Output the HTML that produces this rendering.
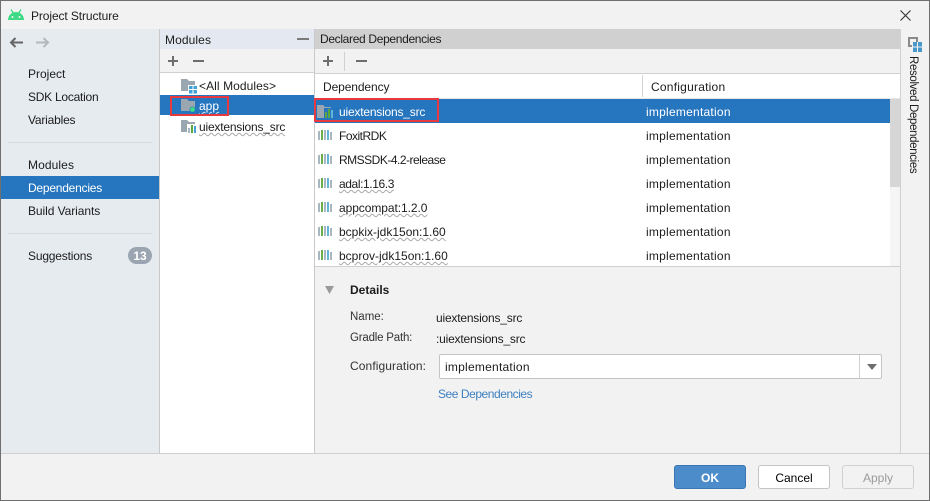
<!DOCTYPE html>
<html><head><meta charset="utf-8"><style>
html,body{margin:0;padding:0;background:#f2f2f2}
#r{position:relative;width:930px;height:501px;overflow:hidden;background:#f2f2f2;font-family:"Liberation Sans",sans-serif;font-size:12px;color:#1c1c1c}
#r div,#r svg{position:absolute}
.t{white-space:nowrap;line-height:16px;height:16px}
.w{text-decoration:underline wavy #a8a8a8 1px;text-underline-offset:1px}
.wh{color:#fff}
.i{letter-spacing:.24px}
.u{letter-spacing:-.2px}
</style></head><body><div id="r">
<!-- panels -->
<div style="left:1px;top:29px;width:158px;height:424px;background:#e6ebf0"></div>
<div style="left:159px;top:29px;width:1px;height:424px;background:#c9c9c9"></div>
<div style="left:160px;top:29px;width:154px;height:20px;background:#e4e8f0"></div>
<div style="left:160px;top:49px;width:154px;height:23px;background:#f2f2f2"></div>
<div style="left:160px;top:72px;width:154px;height:1px;background:#d0d0d0"></div>
<div style="left:160px;top:73px;width:154px;height:380px;background:#fff"></div>
<div style="left:314px;top:29px;width:1px;height:424px;background:#c9c9c9"></div>
<div style="left:315px;top:29px;width:585px;height:20px;background:#d0d0d0"></div>
<div style="left:315px;top:73px;width:585px;height:1px;background:#d0d0d0"></div>
<div style="left:344px;top:52px;width:1px;height:19px;background:#d0d0d0"></div>
<div style="left:315px;top:74px;width:585px;height:192px;background:#fff"></div>
<div style="left:315px;top:98px;width:585px;height:1px;background:#e6e6e6"></div>
<div style="left:642px;top:75px;width:1px;height:22px;background:#d4d4d4"></div>
<div style="left:315px;top:266px;width:585px;height:1px;background:#d0d0d0"></div>
<div style="left:890px;top:99px;width:10px;height:167px;background:#f5f5f5"></div>
<div style="left:890px;top:99px;width:10px;height:88px;background:#d6d6d6"></div>
<div style="left:900px;top:29px;width:1px;height:424px;background:#d0d0d0"></div>
<div style="left:1px;top:453px;width:928px;height:1px;background:#d0d0d0"></div>
<!-- selections -->
<div style="left:1px;top:176px;width:158px;height:23px;background:#2675bf"></div>
<div style="left:160px;top:95px;width:154px;height:20px;background:#2675bf"></div>
<div style="left:315px;top:99px;width:575px;height:24px;background:#2675bf"></div>
<!-- title -->
<svg style="left:8px;top:9px" width="17" height="12" viewBox="0 0 17 12"><path d="M0 11C0 6.500 3.500 3 8 3s8 3.500 8 8z" fill="#3ddc84"/><path d="M3 .5l2.500 4M13 .5l-2.500 4" stroke="#3ddc84" stroke-width="1.300"/><circle cx="4.500" cy="8" r="1" fill="#f2f2f2"/><circle cx="11.500" cy="8" r="1" fill="#f2f2f2"/></svg>
<div class="t" style="left:31px;top:8px;letter-spacing:-.1px">Project Structure</div>
<svg style="left:900px;top:10px" width="11" height="11" viewBox="0 0 11 11"><path d="M.5.500l10 10M10.500.500l-10 10" stroke="#333" stroke-width="1.100" fill="none"/></svg>
<!-- nav arrows -->
<svg style="left:9px;top:37px" width="14" height="11" viewBox="0 0 14 11"><path d="M14 5.500H2M6.500 1l-4.500 4.500 4.500 4.500" stroke="#666" stroke-width="2" fill="none"/></svg>
<svg style="left:36px;top:37px" width="14" height="11" viewBox="0 0 14 11"><path d="M0 5.500h12M7.500 1l4.500 4.500-4.500 4.500" stroke="#b4b8bb" stroke-width="2" fill="none"/></svg>
<!-- sidebar -->
<div class="t" style="left:28px;top:66px">Project</div>
<div class="t" style="left:28px;top:89px;letter-spacing:-.25px">SDK Location</div>
<div class="t" style="left:28px;top:112px;letter-spacing:-.2px">Variables</div>
<div style="left:8px;top:142px;width:144px;height:1px;background:#d8d8d8"></div>
<div class="t" style="left:28px;top:157px;letter-spacing:.1px">Modules</div>
<div class="t wh" style="left:28px;top:180px;letter-spacing:-.23px">Dependencies</div>
<div class="t" style="left:28px;top:203px;letter-spacing:-.07px">Build Variants</div>
<div style="left:8px;top:233px;width:144px;height:1px;background:#d8d8d8"></div>
<div class="t" style="left:28px;top:248px;letter-spacing:-.18px">Suggestions</div>
<div style="left:128px;top:247px;width:24px;height:17px;border-radius:9px;background:#9aa5b1"></div>
<div class="t wh" style="left:128px;top:248px;width:24px;text-align:center;font-weight:bold">13</div>
<!-- modules -->
<div class="t" style="left:165px;top:32px;letter-spacing:.1px">Modules</div>
<div style="left:297px;top:38px;width:12px;height:2px;background:#7a7a7a"></div>
<svg style="left:167px;top:55px" width="12" height="12" viewBox="0 0 12 12"><path d="M6 1v10M1 6h10" stroke="#6e6e6e" stroke-width="2"/></svg>
<div style="left:193px;top:60px;width:11px;height:2px;background:#6e6e6e"></div>
<svg style="left:181px;top:79px" width="16" height="15" viewBox="0 0 16 15"><path d="M0 0h6l2 2h6v10H0z" fill="#9aa7b0"/><path d="M7 6h9v9H7z" fill="#fff"/><path d="M8 7h3.500v3H8zM12.500 7H16v3h-3.500zM8 11h3.500v3.500H8zM12.500 11H16v3.500h-3.500z" fill="#40a0d8"/></svg>
<div class="t" style="left:199px;top:78px;letter-spacing:.08px">&lt;All Modules&gt;</div>
<svg style="left:181px;top:99px" width="16" height="14" viewBox="0 0 16 14"><path d="M0 0h6l2 2h6v10H0z" fill="#9aa7b0"/><circle cx="11.500" cy="10.500" r="3" fill="#2675bf"/><circle cx="11.500" cy="10.500" r="2.400" fill="#3ddc84"/></svg>
<div class="t wh" style="left:199px;top:98px"><span class="w" style="text-decoration-color:#cfe0f0">app</span></div>
<svg style="left:181px;top:120px" width="16" height="14" viewBox="0 0 16 14"><path d="M0 0h6l2 2h6v10H0z" fill="#9aa7b0"/><path d="M6 4h10v10H6z" fill="#fff"/><path d="M7 8h2v5H7z" fill="#a9b7c0"/><path d="M10 5h2v8h-2z" fill="#5aa83c"/><path d="M13 6h2v7h-2z" fill="#40a0d8"/></svg>
<div class="t u" style="left:199px;top:119px"><span class="w">uiextensions_src</span></div>
<div style="left:170px;top:96px;width:55px;height:16px;border:2px solid #e8393f"></div>
<!-- declared -->
<div class="t" style="left:320px;top:31px;letter-spacing:-.33px">Declared Dependencies</div>
<svg style="left:322px;top:55px" width="12" height="12" viewBox="0 0 12 12"><path d="M6 1v10M1 6h10" stroke="#6e6e6e" stroke-width="2"/></svg>
<div style="left:356px;top:60px;width:11px;height:2px;background:#6e6e6e"></div>
<div class="t" style="left:323px;top:79px;letter-spacing:-.1px">Dependency</div>
<div class="t" style="left:651px;top:79px;letter-spacing:.23px">Configuration</div>
<!-- row 1 -->
<svg style="left:317px;top:105px" width="17" height="14" viewBox="0 0 17 14"><path d="M0 0h6l2 2h6v11H0z" fill="#9aa7b0"/><path d="M7 3h10v11H7z" fill="#2675bf"/><path d="M8 7h2v6H8zM11 4h2v9h-2z" fill="#5aa83c"/><path d="M14 5h2v8h-2z" fill="#62b3d8"/></svg>
<div class="t wh u" style="left:339px;top:104px">uiextensions_src</div>
<div class="t wh i" style="left:646px;top:104px">implementation</div>
<div style="left:314px;top:98px;width:121px;height:20px;border:2px solid #e8393f"></div>
<!-- rows -->
<svg style="left:318px;top:130px" width="16" height="132" viewBox="0 0 16 132" shape-rendering="crispEdges">
<defs><g id="b"><path d="M0 1h2v9H0z" fill="#a9b7c0"/><path d="M3 0h2v10H3z" fill="#6cae4a"/><path d="M6 0h2v10H6z" fill="#a9b7c0"/><path d="M9 0h2v10H9z" fill="#62b3d8"/><path d="M12 2h2v8h-2z" fill="#a9b7c0"/></g></defs>
<use href="#b" y="0"/><use href="#b" y="24"/><use href="#b" y="48"/><use href="#b" y="72"/><use href="#b" y="96"/><use href="#b" y="120"/></svg>
<div class="t" style="left:339px;top:128px;letter-spacing:-.5px">FoxitRDK</div>
<div class="t" style="left:339px;top:152px;letter-spacing:-.5px">RMSSDK-4.2-release</div>
<div class="t" style="left:339px;top:176px;letter-spacing:-.4px"><span class="w">adal:1.16.3</span></div>
<div class="t" style="left:339px;top:200px;letter-spacing:-.07px"><span class="w">appcompat:1.2.0</span></div>
<div class="t" style="left:339px;top:224px"><span class="w">bcpkix-jdk15on:1.60</span></div>
<div class="t" style="left:339px;top:248px"><span class="w">bcprov-jdk15on:1.60</span></div>
<div class="t i" style="left:646px;top:128px">implementation</div>
<div class="t i" style="left:646px;top:152px">implementation</div>
<div class="t i" style="left:646px;top:176px">implementation</div>
<div class="t i" style="left:646px;top:200px">implementation</div>
<div class="t i" style="left:646px;top:224px">implementation</div>
<div class="t i" style="left:646px;top:248px">implementation</div>
<!-- resolved strip -->
<svg style="left:908px;top:37px" width="14" height="15" viewBox="0 0 14 15"><path d="M1 1h8v8H1z" fill="none" stroke="#8a8a8a" stroke-width="2"/><path d="M4 5h10v10H4z" fill="#f2f2f2"/><path d="M5 5h4v4.500H5zM10 5h4v4.500h-4zM5 10.500h4V15H5zM10 10.500h4V15h-4z" fill="#4a97c9"/></svg>
<div class="t" style="left:905px;top:56px;font-size:11.500px;letter-spacing:-.35px;transform-origin:0 0;transform:translate(16px,0) rotate(90deg)">Resolved Dependencies</div>
<!-- details -->
<svg style="left:325px;top:286px" width="10" height="8" viewBox="0 0 10 8"><path d="M0 0h9L4.500 8z" fill="#9a9a9a"/></svg>
<div class="t" style="left:350px;top:282px;font-weight:bold">Details</div>
<div class="t" style="left:350px;top:309px;font-size:11.500px;color:#333">Name:</div>
<div class="t u" style="left:436px;top:310px">uiextensions_src</div>
<div class="t" style="left:350px;top:330px;font-size:11.500px;letter-spacing:-.2px;color:#333">Gradle Path:</div>
<div class="t u" style="left:436px;top:331px">:uiextensions_src</div>
<div class="t" style="left:350px;top:358px;color:#333;letter-spacing:.1px">Configuration:</div>
<div style="left:439px;top:354px;width:441px;height:23px;background:#fff;border:1px solid #c4c4c4;border-radius:2px"></div>
<div style="left:859px;top:355px;width:1px;height:23px;background:#d0d0d0"></div>
<svg style="left:866px;top:364px" width="12" height="6" viewBox="0 0 12 6"><path d="M1 0h10L6 6z" fill="#6e6e6e"/></svg>
<div class="t i" style="left:445px;top:359px">implementation</div>
<div class="t" style="left:438px;top:386px;color:#3d7fc0;letter-spacing:-.45px">See Dependencies</div>
<!-- buttons -->
<div style="left:674px;top:465px;width:70px;height:22px;background:#4d8ccb;border:1px solid #3a76b4;border-radius:3px"></div>
<div class="t wh" style="left:674px;top:470px;width:72px;text-align:center;font-weight:bold">OK</div>
<div style="left:758px;top:465px;width:70px;height:22px;background:#fff;border:1px solid #c4c4c4;border-radius:3px"></div>
<div class="t" style="left:758px;top:470px;width:72px;text-align:center;color:#000">Cancel</div>
<div style="left:842px;top:465px;width:70px;height:22px;background:#f2f2f2;border:1px solid #d0d0d0;border-radius:3px"></div>
<div class="t" style="left:842px;top:470px;width:72px;text-align:center;color:#9a9a9a">Apply</div>
<!-- window border -->
<div style="left:0;top:0;width:928px;height:499px;border:1px solid #6f6f6f"></div>
</div></body></html>
